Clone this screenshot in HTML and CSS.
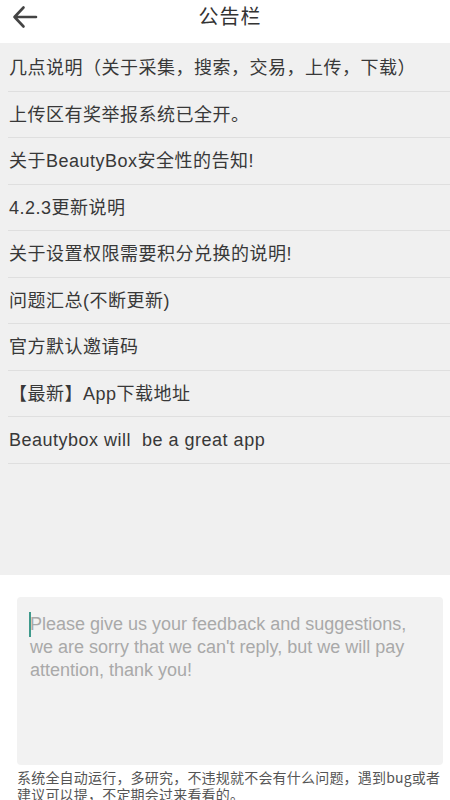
FILE: index.html
```html
<!DOCTYPE html>
<html lang="zh">
<head>
<meta charset="utf-8">
<title>公告栏</title>
<link rel="stylesheet" href="styles.css">
</head>
<body>
<div class="page">
  <header class="topbar">
    <button class="back" aria-label="返回">
      <svg width="26" height="24" viewBox="0 0 26 24"><path d="M24 12H2.5M11.5 2.5L2.5 12l9 9.5" fill="none" stroke="#444" stroke-width="2.6" stroke-linecap="round" stroke-linejoin="round"/></svg>
    </button>
    <h1 class="title">公告栏</h1>
  </header>
  <ul class="notice-list">
    <li class="notice">几点说明（关于采集，搜索，交易，上传，下载）</li>
    <li class="notice">上传区有奖举报系统已全开。</li>
    <li class="notice">关于BeautyBox安全性的告知!</li>
    <li class="notice">4.2.3更新说明</li>
    <li class="notice">关于设置权限需要积分兑换的说明!</li>
    <li class="notice">问题汇总(不断更新)</li>
    <li class="notice">官方默认邀请码</li>
    <li class="notice">【最新】App下载地址</li>
    <li class="notice">Beautybox will&nbsp; be a great app</li>
  </ul>
  <section class="feedback">
    <div class="input-wrap">
      <textarea class="input" placeholder="Please give us your feedback and suggestions, we are sorry that we can't reply, but we will pay attention, thank you!"></textarea>
      <span class="caret"></span>
    </div>
    <p class="hint">系统全自动运行，多研究，不违规就不会有什么问题，遇到bug或者建议可以提，不定期会过来看看的。</p>
  </section>
</div>
</body>
</html>
```
FILE: styles.css
```css
* { box-sizing: border-box; }
html, body { margin: 0; padding: 0; background: #fff; }
body {
  font-family: "Liberation Sans", "Noto Sans CJK SC", sans-serif;
  color: #333;
  overflow: hidden;
}
.page { width: 450px; }

.topbar {
  height: 43px;
  display: flex;
  align-items: flex-start;
  position: relative;
  background: #fff;
}
.back {
  border: 0;
  background: none;
  padding: 0;
  margin: 5px 0 0 12px;
  width: 26px;
  height: 24px;
  display: flex;
}
.title {
  margin: 0;
  position: absolute;
  left: 0;
  right: 0;
  top: 0;
  text-align: center;
  padding-left: 10px;
  line-height: 35px;
  font-size: 20px;
  letter-spacing: 1px;
  font-weight: normal;
  color: #333;
  pointer-events: none;
}

.notice-list {
  list-style: none;
  margin: 0;
  padding: 2px 0 0 0;
  height: 532px;
  background: #f0f0f0;
}
.notice {
  height: 46.5px;
  line-height: 46px;
  margin-left: 8px;
  padding-left: 1px;
  border-bottom: 1px solid #dfdfdf;
  font-size: 18px;
  letter-spacing: 0.5px;
  color: #383838;
  white-space: nowrap;
}

.feedback { padding: 22px 7px 0 17px; }
.input-wrap {
  position: relative;
  width: 426px;
  height: 168px;
  background: #f2f2f2;
  border-radius: 4px;
}
.input {
  display: block;
  width: 100%;
  height: 100%;
  border: 0;
  background: transparent;
  resize: none;
  padding: 16px 12px 0 13px;
  font-family: "Liberation Sans", sans-serif;
  font-size: 18px;
  line-height: 23px;
  color: #333;
  outline: none;
}
.input::placeholder { color: #a9a9a9; }
.caret {
  position: absolute;
  left: 12px;
  top: 15px;
  width: 2px;
  height: 25px;
  background: #3f9a8c;
}
.hint {
  margin: 4px -6px 0 0;
  font-size: 14px;
  letter-spacing: 0.2px;
  line-height: 17px;
  color: #555;
  font-family: "Noto Sans CJK SC", sans-serif;
}
```
